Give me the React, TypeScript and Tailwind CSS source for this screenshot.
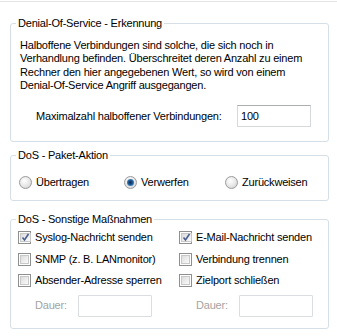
import type { ReactNode } from "react";

function Group({ title, children, className = "" }: { title: string; children: ReactNode; className?: string }) {
  return (
    <fieldset className={`border border-[#d5dfe5] rounded-[3px] ${className}`}>
      <legend className="ml-[5px] px-[2px] leading-[13px]">{title}</legend>
      {children}
    </fieldset>
  );
}

function Check({ checked, label }: { checked?: boolean; label: string }) {
  return (
    <div className="flex items-center gap-[4px] h-[13px]">
      <span className="w-[13px] h-[13px] border border-[#8e8f8f] bg-white p-px flex">
        <span className="flex-1 border border-[#c8c8c8] bg-gradient-to-br from-[#dcdcdc] to-[#fbfbfb] flex items-center justify-center">
          {checked && (
            <svg width="9" height="9" viewBox="0 0 9 9">
              <path d="M1.5 4.5 L3.5 7 L7.5 1" fill="none" stroke="#4a5e8f" strokeWidth="1.6" />
            </svg>
          )}
        </span>
      </span>
      <span className="leading-[13px]">{label}</span>
    </div>
  );
}

function Radio({ checked, label }: { checked?: boolean; label: string }) {
  return (
    <div className="flex items-center gap-[4px]">
      <span className="w-[13px] h-[13px] rounded-full border border-[#9a9a9a] bg-[radial-gradient(circle_at_40%_35%,#ffffff_0%,#e6e6e6_55%,#c9c9c9_100%)] flex items-center justify-center">
        {checked && (
          <span className="w-[7px] h-[7px] rounded-full bg-[radial-gradient(circle_at_50%_50%,#0d2a4d_0%,#1e5a96_45%,#6fb0e6_100%)]" />
        )}
      </span>
      <span className="leading-[13px]">{label}</span>
    </div>
  );
}

function Dauer() {
  return (
    <div className="flex items-center pl-[17px] -mt-px">
      <span className="w-[43px] text-[#a3a3a3]">Dauer:</span>
      <span className="w-[74px] h-[22px] border border-[#dadde2] bg-white rounded-[1px]" />
    </div>
  );
}

export default function App() {
  return (
    <div className="w-[337px] h-[336px] bg-white text-black text-[11px] tracking-[-0.2px] font-['Liberation_Sans',Arial,sans-serif] overflow-hidden">
      <div className="h-px mt-px bg-[#e3e3e3]" />
      <div className="pl-[10px] pr-[8px] pt-[15px] flex flex-col">
        <Group title="Denial-Of-Service - Erkennung" className="pb-[14px]">
          <p className="pl-[9px] pt-[9px] leading-[13.3px]">
            Halboffene Verbindungen sind solche, die sich noch in
            <br />
            Verhandlung befinden. Überschreitet deren Anzahl zu einem
            <br />
            Rechner den hier angegebenen Wert, so wird von einem
            <br />
            Denial-Of-Service Angriff ausgegangen.
          </p>
          <div className="flex items-center pl-[25px] pr-[17px] mt-[13px]">
            <span>Maximalzahl halboffener Verbindungen:</span>
            <span className="ml-auto w-[74px] h-[22px] border border-[#d5d9de] border-t-[#abadb3] bg-white px-[3px] flex items-center">
              100
            </span>
          </div>
        </Group>

        <Group title="DoS - Paket-Aktion" className="mt-[7px] pb-[11px]">
          <div className="grid grid-cols-[105px_101px_1fr] pl-[8px] pt-[14px]">
            <Radio label="Übertragen" />
            <Radio checked label="Verwerfen" />
            <Radio label="Zurückweisen" />
          </div>
        </Group>

        <Group title="DoS - Sonstige Maßnahmen" className="mt-[12px] pb-[11px]">
          <div className="grid grid-cols-[161px_1fr] pl-[7px] pt-[5px] gap-y-[8.5px]">
            <Check checked label="Syslog-Nachricht senden" />
            <Check checked label="E-Mail-Nachricht senden" />
            <Check label="SNMP (z. B. LANmonitor)" />
            <Check label="Verbindung trennen" />
            <Check label="Absender-Adresse sperren" />
            <Check label="Zielport schließen" />
            <Dauer />
            <Dauer />
          </div>
        </Group>
      </div>
    </div>
  );
}
